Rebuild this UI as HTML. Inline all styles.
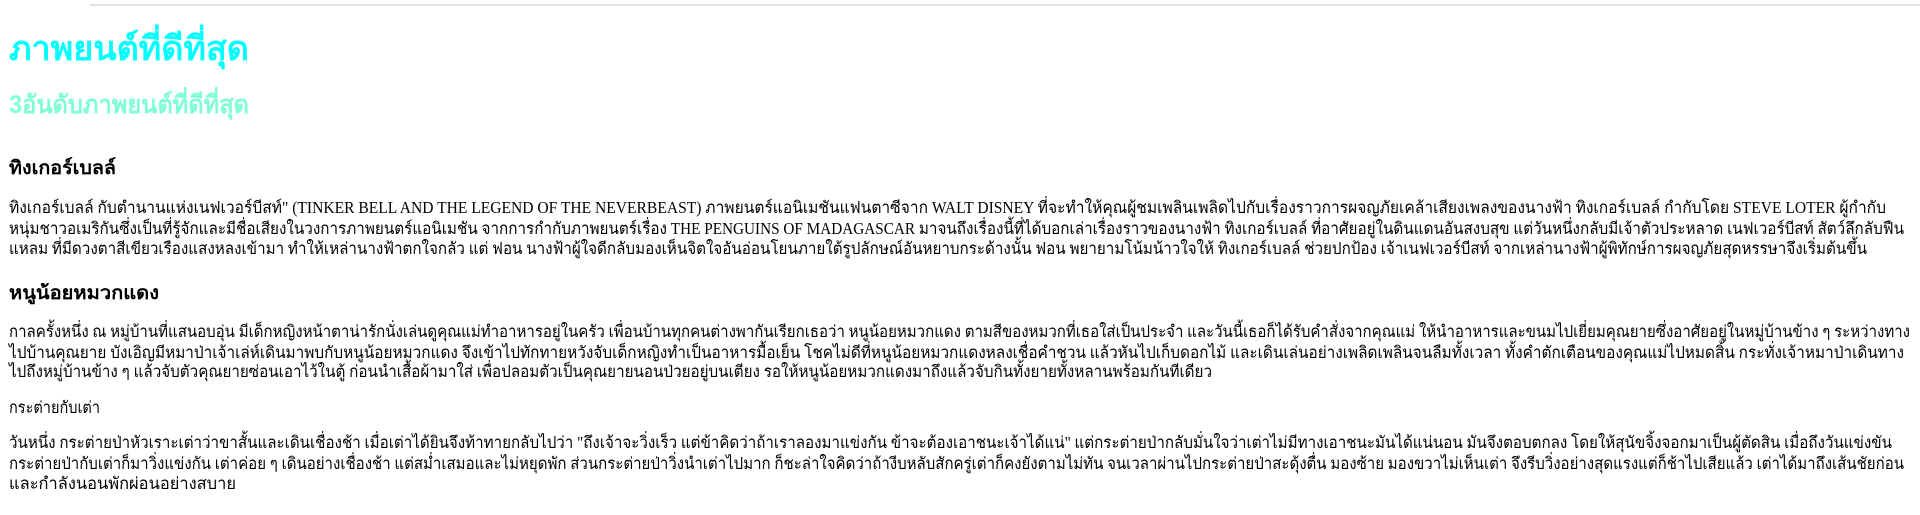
<!DOCTYPE html>
<html><head><meta charset="utf-8"><style>
html,body{margin:0;padding:0;background:#fff;width:1920px;height:515px;overflow:hidden;position:relative}
.l{position:absolute;left:9px;white-space:nowrap;height:20px;line-height:20px;font-family:"Liberation Serif",serif;font-size:16.5px;color:#000;transform-origin:0 50%}
.h{font-family:"Liberation Sans",sans-serif;font-weight:bold}
</style></head><body>
<div style="position:absolute;left:90px;right:0;top:4px;height:2px;background:#e2e2e2"></div>
<div class="l h" id="a0" style="top:29px;height:40px;line-height:40px;font-size:34px;color:#00ffff">ภาพยนต์ที่ดีที่สุด</div>
<div class="l h" id="a1" style="top:90px;height:30px;line-height:30px;font-size:25px;color:#7fffd4">3อันดับภาพยนต์ที่ดีที่สุด</div>
<div class="l h" id="a2" style="top:157px;height:24px;line-height:24px;font-size:19px">ทิงเกอร์เบลล์</div>
<div class="l" id="a3" style="top:198px">ทิงเกอร์เบลล์ กับตำนานแห่งเนฟเวอร์บีสท์" (TINKER BELL AND THE LEGEND OF THE NEVERBEAST) ภาพยนตร์แอนิเมชันแฟนตาซีจาก WALT DISNEY ที่จะทำให้คุณผู้ชมเพลินเพลิดไปกับเรื่องราวการผจญภัยเคล้าเสียงเพลงของนางฟ้า ทิงเกอร์เบลล์ กำกับโดย STEVE LOTER ผู้กำกับ</div>
<div class="l" id="a4" style="top:219px">หนุ่มชาวอเมริกันซึ่งเป็นที่รู้จักและมีชื่อเสียงในวงการภาพยนตร์แอนิเมชัน จากการกำกับภาพยนตร์เรื่อง THE PENGUINS OF MADAGASCAR มาจนถึงเรื่องนี้ที่ได้บอกเล่าเรื่องราวของนางฟ้า ทิงเกอร์เบลล์ ที่อาศัยอยู่ในดินแดนอันสงบสุข แต่วันหนึ่งกลับมีเจ้าตัวประหลาด เนฟเวอร์บีสท์ สัตว์ลึกลับฟืน</div>
<div class="l" id="a5" style="top:239px">แหลม ที่มีดวงตาสีเขียวเรืองแสงหลงเข้ามา ทำให้เหล่านางฟ้าตกใจกลัว แต่ ฟอน นางฟ้าผู้ใจดีกลับมองเห็นจิตใจอันอ่อนโยนภายใต้รูปลักษณ์อันหยาบกระด้างนั้น ฟอน พยายามโน้มน้าวใจให้ ทิงเกอร์เบลล์ ช่วยปกป้อง เจ้าเนฟเวอร์บีสท์ จากเหล่านางฟ้าผู้พิทักษ์การผจญภัยสุดหรรษาจึงเริ่มต้นขึ้น</div>
<div class="l h" id="a6" style="top:282px;height:24px;line-height:24px;font-size:19px">หนูน้อยหมวกแดง</div>
<div class="l" id="a7" style="top:322px">กาลครั้งหนึ่ง ณ หมู่บ้านที่แสนอบอุ่น มีเด็กหญิงหน้าตาน่ารักนั่งเล่นดูคุณแม่ทำอาหารอยู่ในครัว เพื่อนบ้านทุกคนต่างพากันเรียกเธอว่า หนูน้อยหมวกแดง ตามสีของหมวกที่เธอใส่เป็นประจำ และวันนี้เธอก็ได้รับคำสั่งจากคุณแม่ ให้นำอาหารและขนมไปเยี่ยมคุณยายซึ่งอาศัยอยู่ในหมู่บ้านข้าง ๆ ระหว่างทาง</div>
<div class="l" id="a8" style="top:343px">ไปบ้านคุณยาย บังเอิญมีหมาป่าเจ้าเล่ห์เดินมาพบกับหนูน้อยหมวกแดง จึงเข้าไปทักทายหวังจับเด็กหญิงทำเป็นอาหารมื้อเย็น โชคไม่ดีที่หนูน้อยหมวกแดงหลงเชื่อคำชวน แล้วหันไปเก็บดอกไม้ และเดินเล่นอย่างเพลิดเพลินจนลืมทั้งเวลา ทั้งคำตักเตือนของคุณแม่ไปหมดสิ้น กระทั่งเจ้าหมาป่าเดินทาง</div>
<div class="l" id="a9" style="top:362px">ไปถึงหมู่บ้านข้าง ๆ แล้วจับตัวคุณยายซ่อนเอาไว้ในตู้ ก่อนนำเสื้อผ้ามาใส่ เพื่อปลอมตัวเป็นคุณยายนอนป่วยอยู่บนเตียง รอให้หนูน้อยหมวกแดงมาถึงแล้วจับกินทั้งยายทั้งหลานพร้อมกันทีเดียว</div>
<div class="l" id="a10" style="top:398px">กระต่ายกับเต่า</div>
<div class="l" id="a11" style="top:433px">วันหนึ่ง กระต่ายป่าหัวเราะเต่าว่าขาสั้นและเดินเชื่องช้า เมื่อเต่าได้ยินจึงท้าทายกลับไปว่า "ถึงเจ้าจะวิ่งเร็ว แต่ข้าคิดว่าถ้าเราลองมาแข่งกัน ข้าจะต้องเอาชนะเจ้าได้แน่" แต่กระต่ายป่ากลับมั่นใจว่าเต่าไม่มีทางเอาชนะมันได้แน่นอน มันจึงตอบตกลง โดยให้สุนัขจิ้งจอกมาเป็นผู้ตัดสิน เมื่อถึงวันแข่งขัน</div>
<div class="l" id="a12" style="top:454px">กระต่ายป่ากับเต่าก็มาวิ่งแข่งกัน เต่าค่อย ๆ เดินอย่างเชื่องช้า แต่สม่ำเสมอและไม่หยุดพัก ส่วนกระต่ายป่าวิ่งนำเต่าไปมาก ก็ชะล่าใจคิดว่าถ้างีบหลับสักครู่เต่าก็คงยังตามไม่ทัน จนเวลาผ่านไปกระต่ายป่าสะดุ้งตื่น มองซ้าย มองขวาไม่เห็นเต่า จึงรีบวิ่งอย่างสุดแรงแต่ก็ช้าไปเสียแล้ว เต่าได้มาถึงเส้นชัยก่อน</div>
<div class="l" id="a13" style="top:474px">และกำลังนอนพักผ่อนอย่างสบาย</div>
<script>
var ends=[249,249,116,1886,1904,1867,159,1910,1904,1212,100,1892,1904,236];
for(var i=0;i<ends.length;i++){var e=document.getElementById('a'+i);var w=e.getBoundingClientRect().width;var t=ends[i]-9;if(w>0)e.style.transform='scaleX('+(t/w)+')';}
</script>
</body></html>
